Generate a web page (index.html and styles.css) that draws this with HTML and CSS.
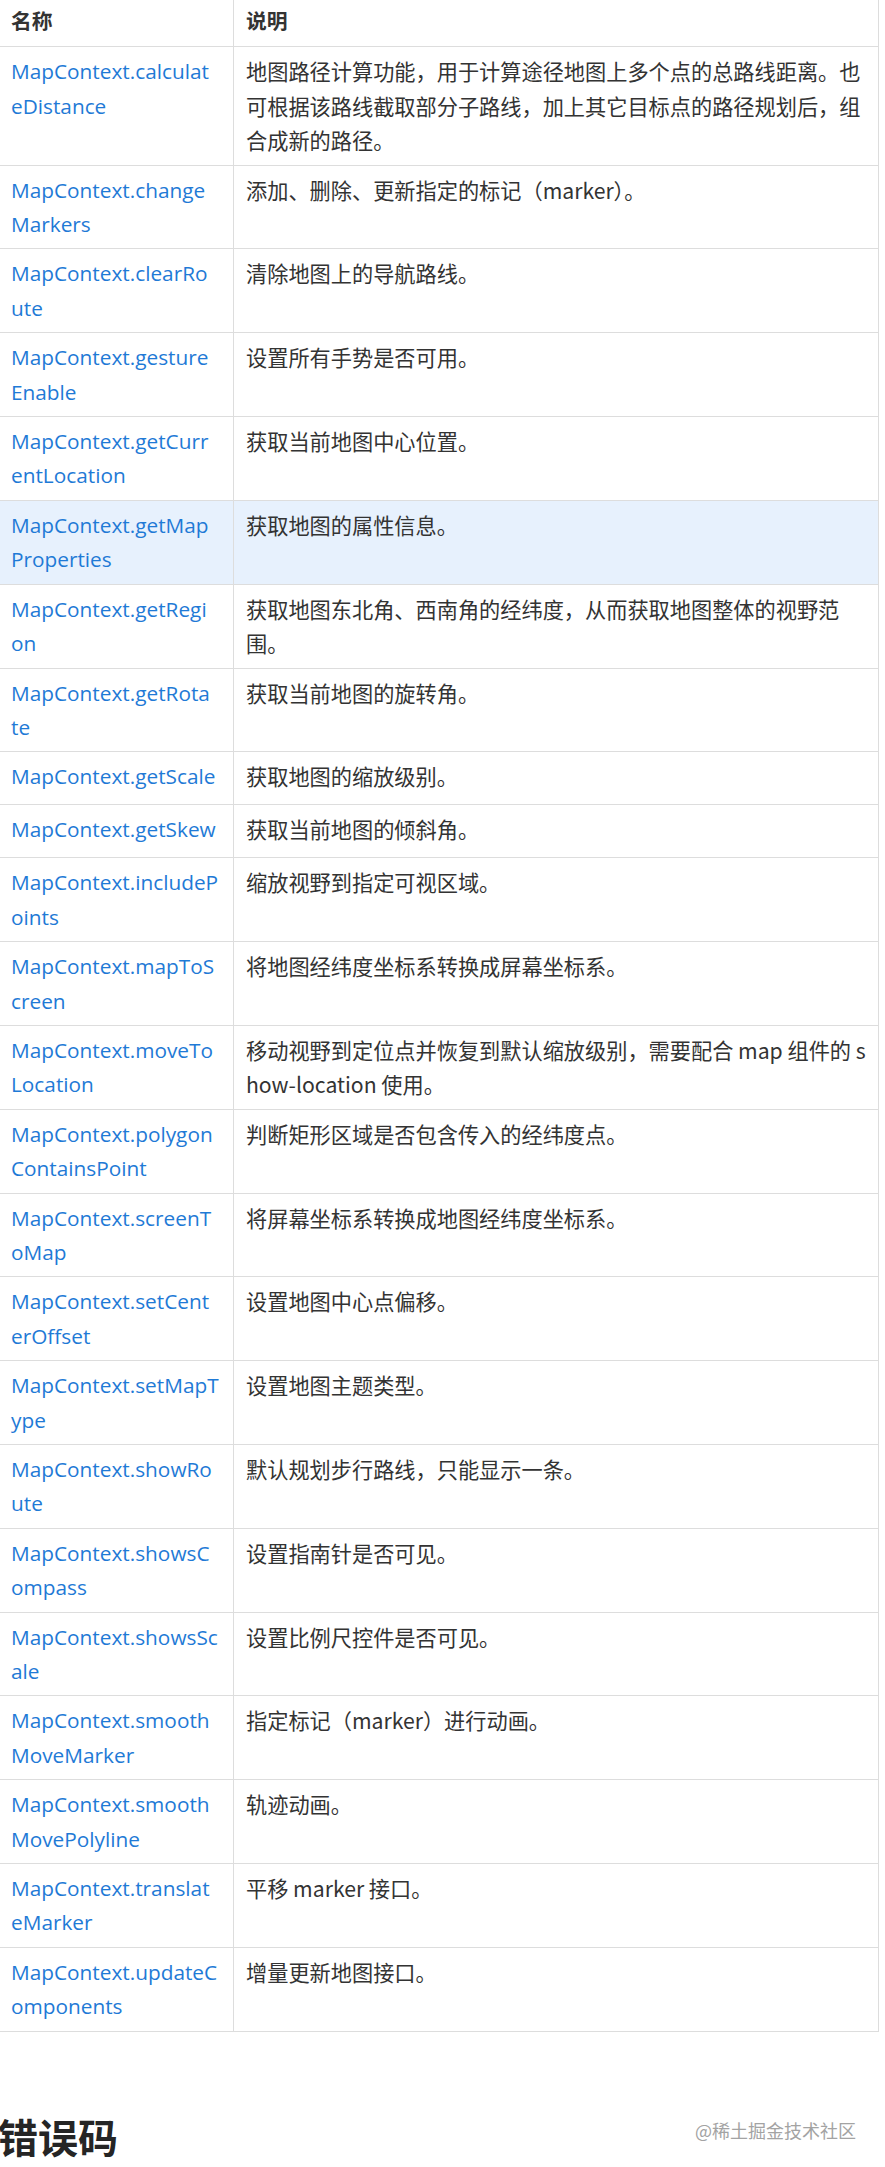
FILE: index.html
```html
<!DOCTYPE html>
<html lang="zh-CN">
<head>
    <meta charset="UTF-8">
    <meta name="viewport" content="width=device-width, initial-scale=1.0">
    <title>MapContext 方法</title>
    <link rel="stylesheet" href="styles.css">
</head>
<body>
    <div class="article">
        <table class="api-table">
            <thead>
                <tr>
                    <th class="col-name">名称</th>
                    <th>说明</th>
                </tr>
            </thead>
            <tbody>
                <tr><td><a href="#">MapContext.calculat<wbr>eDistance</a></td><td>地图路径计算功能，用于计算途径地图上多个点的总路线距离。也可根据该路线截取部分子路线，加上其它目标点的路径规划后，组合成新的路径。</td></tr>
                <tr><td><a href="#">MapContext.change<wbr>Markers</a></td><td>添加、删除、更新指定的标记（marker）。</td></tr>
                <tr><td><a href="#">MapContext.clearRo<wbr>ute</a></td><td>清除地图上的导航路线。</td></tr>
                <tr><td><a href="#">MapContext.gesture<wbr>Enable</a></td><td>设置所有手势是否可用。</td></tr>
                <tr><td><a href="#">MapContext.getCurr<wbr>entLocation</a></td><td>获取当前地图中心位置。</td></tr>
                <tr class="active"><td><a href="#">MapContext.getMap<wbr>Properties</a></td><td>获取地图的属性信息。</td></tr>
                <tr><td><a href="#">MapContext.getRegi<wbr>on</a></td><td>获取地图东北角、西南角的经纬度，从而获取地图整体的视野范围。</td></tr>
                <tr><td><a href="#">MapContext.getRota<wbr>te</a></td><td>获取当前地图的旋转角。</td></tr>
                <tr><td><a href="#">MapContext.getScale</a></td><td>获取地图的缩放级别。</td></tr>
                <tr><td><a href="#">MapContext.getSkew</a></td><td>获取当前地图的倾斜角。</td></tr>
                <tr><td><a href="#">MapContext.includeP<wbr>oints</a></td><td>缩放视野到指定可视区域。</td></tr>
                <tr><td><a href="#">MapContext.mapToS<wbr>creen</a></td><td>将地图经纬度坐标系转换成屏幕坐标系。</td></tr>
                <tr><td><a href="#">MapContext.moveTo<wbr>Location</a></td><td>移动视野到定位点并恢复到默认缩放级别，需要配合 map 组件的 show-location 使用。</td></tr>
                <tr><td><a href="#">MapContext.polygon<wbr>ContainsPoint</a></td><td>判断矩形区域是否包含传入的经纬度点。</td></tr>
                <tr><td><a href="#">MapContext.screenT<wbr>oMap</a></td><td>将屏幕坐标系转换成地图经纬度坐标系。</td></tr>
                <tr><td><a href="#">MapContext.setCent<wbr>erOffset</a></td><td>设置地图中心点偏移。</td></tr>
                <tr><td><a href="#">MapContext.setMapT<wbr>ype</a></td><td>设置地图主题类型。</td></tr>
                <tr><td><a href="#">MapContext.showRo<wbr>ute</a></td><td>默认规划步行路线，只能显示一条。</td></tr>
                <tr><td><a href="#">MapContext.showsC<wbr>ompass</a></td><td>设置指南针是否可见。</td></tr>
                <tr><td><a href="#">MapContext.showsSc<wbr>ale</a></td><td>设置比例尺控件是否可见。</td></tr>
                <tr><td><a href="#">MapContext.smooth<wbr>MoveMarker</a></td><td>指定标记（marker）进行动画。</td></tr>
                <tr><td><a href="#">MapContext.smooth<wbr>MovePolyline</a></td><td>轨迹动画。</td></tr>
                <tr><td><a href="#">MapContext.translat<wbr>eMarker</a></td><td>平移 marker 接口。</td></tr>
                <tr><td><a href="#">MapContext.updateC<wbr>omponents</a></td><td>增量更新地图接口。</td></tr>
            </tbody>
        </table>

        <div class="section-head">
            <h2 class="section-title">错误码</h2>
            <span class="watermark">@稀土掘金技术社区</span>
        </div>
    </div>
</body>
</html>
```

FILE: styles.css
```css
body {
    margin: 0;
    font-family: "Open Sans", "Noto Sans CJK SC", sans-serif;
    color: #333;
    background: #fff;
}

.article {
    width: 885px;
    overflow: hidden;
}

.api-table {
    width: 881px;
    margin: -2px 0 0 -2px;
    border-collapse: collapse;
    table-layout: fixed;
}

.api-table th,
.api-table td {
    border: 1px solid #ddd;
    padding: 7px 12px;
    text-align: left;
    vertical-align: top;
    line-height: 34.4px;
}

.api-table th {
    padding: 4px 12px 9px;
    font-family: "Noto Sans CJK SC", sans-serif;
    font-size: 20.8px;
    font-weight: bold;
}

.col-name {
    width: 210px;
}

.api-table tbody tr {
    height: 53px;
}

.api-table td:first-child {
    font-size: 20.8px;
}

.api-table td:last-child {
    padding-right: 8px;
    font-family: "Noto Sans CJK SC", sans-serif;
    font-size: 21.2px;
    word-break: break-all;
}

.api-table a {
    color: #1f7ad6;
    text-decoration: none;
}

.api-table tr.active {
    background: #e7f1fd;
}

.section-head {
    position: relative;
    margin-top: 74px;
}

.section-title {
    margin: 0 0 0 -2px;
    font-family: "Noto Sans CJK SC", sans-serif;
    font-size: 40px;
    font-weight: bold;
    line-height: 60px;
    color: #252525;
}

.watermark {
    position: absolute;
    top: 12px;
    right: 29px;
    font-family: "Noto Sans CJK SC", sans-serif;
    font-size: 18px;
    line-height: 24px;
    color: #a3a3a3;
    text-shadow: 0 0 1px #fff;
}
```
